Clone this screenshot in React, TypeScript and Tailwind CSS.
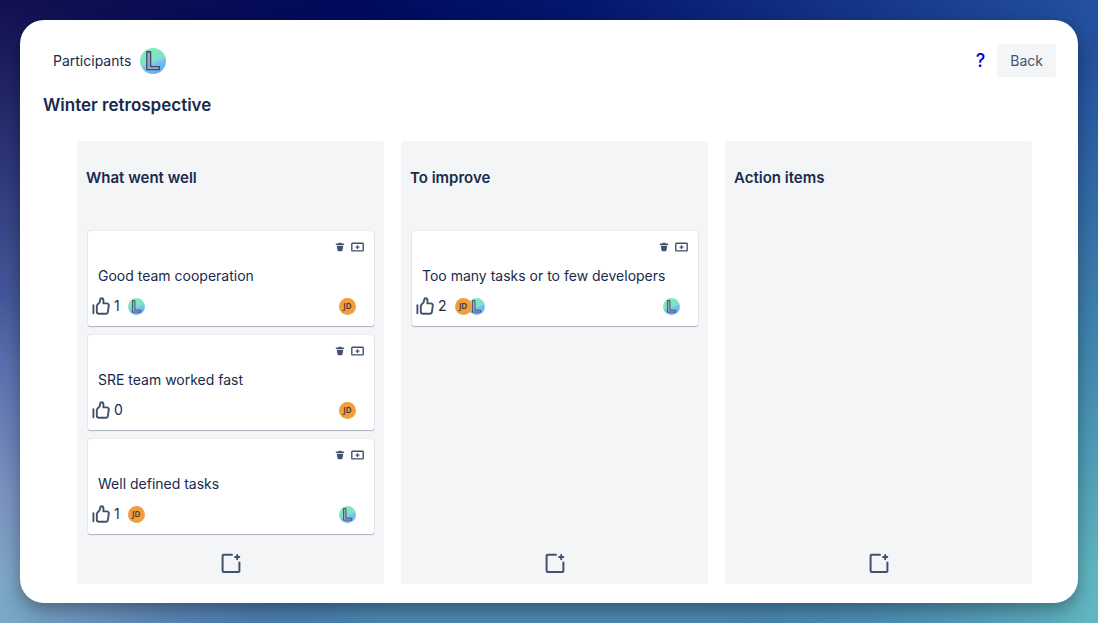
import { useId } from "react";

type Person = "L" | "JD";

interface Note {
  text: string;
  votes: Person[];
  author: Person;
}

interface Column {
  title: string;
  notes: Note[];
}

const columns: Column[] = [
  {
    title: "What went well",
    notes: [
      { text: "Good team cooperation", votes: ["L"], author: "JD" },
      { text: "SRE team worked fast", votes: [], author: "JD" },
      { text: "Well defined tasks", votes: ["JD"], author: "L" },
    ],
  },
  {
    title: "To improve",
    notes: [
      { text: "Too many tasks or to few developers", votes: ["JD", "L"], author: "L" },
    ],
  },
  { title: "Action items", notes: [] },
];

function LogoAvatar({ className }: { className: string }) {
  const id = useId();
  return (
    <svg viewBox="0 0 26 26" className={className} role="img" aria-label="L">
      <defs>
        <linearGradient id={id} x1="0.3" y1="0" x2="0.7" y2="1">
          <stop offset="0" stopColor="#86ecb4" />
          <stop offset="0.5" stopColor="#80dfcb" />
          <stop offset="0.62" stopColor="#76c0f0" />
          <stop offset="1" stopColor="#66acf4" />
        </linearGradient>
      </defs>
      <circle cx="13" cy="13" r="13" fill={`url(#${id})`} />
      <path
        d="M6.8 3.8H10.6V18.6H19.4V21.6H6.8Z"
        fill="#a3abc2"
        stroke="#404a70"
        strokeWidth="1.4"
        strokeLinejoin="round"
      />
    </svg>
  );
}

function Avatar({ person }: { person: Person }) {
  if (person === "L") return <LogoAvatar className="size-[17px] shrink-0" />;
  return (
    <span className="flex size-[17px] shrink-0 items-center justify-center rounded-full bg-[#f19e3f] font-['Noto_Sans',sans-serif] text-[8px] leading-none font-semibold text-[#3b3a3c]">
      JD
    </span>
  );
}

function ThumbIcon() {
  return (
    <svg
      viewBox="0 0 18 18"
      className="size-[18px]"
      fill="none"
      stroke="#42526e"
      strokeWidth="1.9"
      strokeLinecap="round"
      strokeLinejoin="round"
      aria-hidden="true"
    >
      <path d="M1.4 8.2V16.2" />
      <path d="M4.8 9.2C4.8 8.2 5.2 7.7 6 7C7.8 5.6 8.2 4.5 8.3 2.6C8.3 1.6 8.9 1.2 9.6 1.2C10.8 1.2 11.4 2.2 11.4 3.4V6.4H14.8C16.2 6.4 17 7.3 16.8 8.6L15.9 14.8C15.7 16.1 15 16.7 13.8 16.7H7C5.5 16.7 4.8 15.8 4.8 14.4Z" />
    </svg>
  );
}

function TrashIcon() {
  return (
    <svg viewBox="0 0 10 10" className="size-[10px]" fill="#42526e" aria-hidden="true">
      <path d="M3.2 1.6C3.2 1.1 3.5 0.8 4 0.8H6C6.5 0.8 6.8 1.1 6.8 1.6H8.6C9 1.6 9.2 1.9 9.2 2.3V3.1H0.8V2.3C0.8 1.9 1 1.6 1.4 1.6Z" />
      <path d="M1.7 3.7H8.3L7.5 8.3C7.4 8.9 7 9.3 6.4 9.3H3.6C3 9.3 2.6 8.9 2.5 8.3Z" />
    </svg>
  );
}

function GroupIcon() {
  return (
    <svg viewBox="0 0 13 10" className="h-[10px] w-[13px]" fill="none" stroke="#42526e" aria-hidden="true">
      <rect x="0.8" y="1.3" width="11.4" height="7.6" rx="0.6" strokeWidth="1.4" />
      <path d="M6.5 3.2V7M4.6 5.1H8.4" strokeWidth="1.3" />
    </svg>
  );
}

function AddIcon() {
  return (
    <svg
      viewBox="0 0 20 20"
      className="size-5"
      fill="none"
      stroke="#42526e"
      strokeWidth="2"
      strokeLinecap="round"
      strokeLinejoin="round"
      aria-hidden="true"
    >
      <path d="M11 1.8H2.6C2 1.8 1.6 2.2 1.6 2.8V18C1.6 18.6 2 19 2.6 19H17.4C18 19 18.4 18.6 18.4 18V9.6" />
      <path d="M16.2 2V6.2M14.1 4.1H18.3" />
    </svg>
  );
}

function NoteCard({ note }: { note: Note }) {
  return (
    <li className="rounded-xs bg-white pt-2.5 pb-2 shadow-[0_1px_1px_rgba(9,30,66,0.28),0_0_1px_rgba(9,30,66,0.31)]">
      <div className="flex justify-end gap-1.5 pr-2.5">
        <button type="button" aria-label="Delete note" className="flex h-3 items-center">
          <TrashIcon />
        </button>
        <button type="button" aria-label="Group note" className="flex h-3 items-center">
          <GroupIcon />
        </button>
      </div>
      <p className="mt-[11px] px-2.5 text-sm leading-6">{note.text}</p>
      <div className="mt-1.5 flex h-6 items-center pr-[18px] pl-1">
        <button type="button" aria-label="Vote" className="flex">
          <ThumbIcon />
        </button>
        <span className="mr-2 ml-1 text-sm leading-5">{note.votes.length}</span>
        <span className="flex">
          {note.votes.map((person, index) => (
            <span key={person} className={index === 0 ? "relative z-10" : "-ml-1"}>
              <Avatar person={person} />
            </span>
          ))}
        </span>
        <span className="ml-auto">
          <Avatar person={note.author} />
        </span>
      </div>
    </li>
  );
}

export default function App() {
  return (
    <div className="flex min-h-screen flex-col bg-[radial-gradient(55%_16%_at_50%_100%,#4a86b0_0%,#4a86b0_30%,transparent_100%),radial-gradient(50%_100%_at_0%_100%,#80b0ca_0%,#7a93c0_20%,#5d73b0_40%,#45589b_52%,transparent_100%),radial-gradient(70%_100%_at_100%_100%,#66c0c4_0%,#4389b0_42%,transparent_90%),linear-gradient(97deg,#12104f_0%,#000a5c_30%,#04176e_50%,#2553a0_95%)] p-5 font-['Inter','Liberation_Sans',sans-serif] text-[#172b4d]">
      <main className="flex flex-1 flex-col rounded-3xl bg-white px-[22px] pt-6 pb-[19px] shadow-[0_6px_18px_rgba(0,0,0,0.35)]">
        <header className="flex items-center justify-between">
          <div className="flex items-center gap-[9px] pl-[11px] text-sm">
            <span>Participants</span>
            <LogoAvatar className="size-[26px]" />
          </div>
          <div className="flex items-center gap-3">
            <a href="#help" aria-label="Help" className="text-lg leading-6 font-medium text-[#0000cc]">
              ?
            </a>
            <button type="button" className="h-[33px] rounded-[3px] bg-[#f4f5f7] px-[13px] text-sm text-[#42526e]">
              Back
            </button>
          </div>
        </header>
        <h1 className="mt-4 ml-px text-[17px] leading-6 font-semibold">Winter retrospective</h1>
        <div className="mt-6 mr-6 ml-[35px] grid flex-1 grid-cols-3 gap-[17px]">
          {columns.map((column) => (
            <section key={column.title} className="flex flex-col rounded-[3px] bg-[#f4f5f7] pb-[11px]">
              <h2 className="px-[9px] pt-[27px] text-[15px] leading-5 font-semibold">{column.title}</h2>
              <ul className="mt-[43px] flex flex-1 flex-col gap-[9px] pr-2.5 pl-[11px]">
                {column.notes.map((note) => (
                  <NoteCard key={note.text} note={note} />
                ))}
              </ul>
              <button type="button" aria-label="Add note" className="mt-[18px] self-center">
                <AddIcon />
              </button>
            </section>
          ))}
        </div>
      </main>
    </div>
  );
}
